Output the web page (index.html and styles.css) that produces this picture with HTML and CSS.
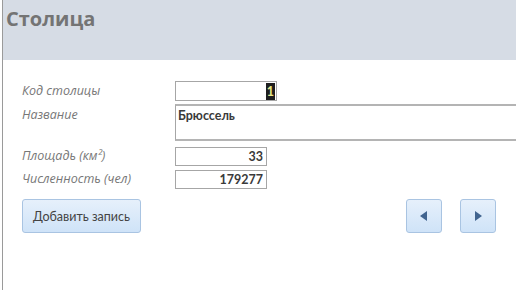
FILE: index.html
```html
<!DOCTYPE html>
<html lang="ru">
<head>
  <meta charset="UTF-8" />
  <title>Столица</title>
  <link rel="stylesheet" href="styles.css">
</head>
<body>
  <div class="frame">
    <div class="header">
      <h1>Столица</h1>
    </div>

    <div class="form">
      <div class="row row-code">
        <div class="label">Код столицы</div>
        <div class="field field-code"><span class="sel">1</span></div>
      </div>
      <div class="row row-name">
        <div class="label">Название</div>
        <div class="field field-name">Брюссель</div>
      </div>
      <div class="row row-area">
        <div class="label">Площадь (км²)</div>
        <div class="field field-num">33</div>
      </div>
      <div class="row row-pop">
        <div class="label">Численность (чел)</div>
        <div class="field field-num">179277</div>
      </div>
    </div>

    <div class="actions">
      <button class="btn btn-add">Добавить запись</button>
      <div class="nav">
        <button class="btn btn-nav">
          <svg width="8" height="10" viewBox="0 0 8 10"><polygon points="7,0 7,10 0,5" fill="#41648f"/></svg>
        </button>
        <button class="btn btn-nav">
          <svg width="8" height="10" viewBox="0 0 8 10"><polygon points="1,0 1,10 8,5" fill="#41648f"/></svg>
        </button>
      </div>
    </div>
  </div>
</body>
</html>
```

FILE: styles.css
```css
body {
  margin: 0;
  background: #fff;
  font-family: 'Open Sans', 'Liberation Sans', sans-serif;
  width: 516px;
  height: 290px;
  overflow: hidden;
}
.frame {
  margin-left: 2px;
  border-left: 1px solid #9a9a9a;
  height: 290px;
}
.header {
  height: 60px;
  background: #d6dce5;
  padding: 5px 0 0 3px;
  box-sizing: border-box;
}
h1 {
  margin: 0;
  font-size: 20px;
  font-weight: bold;
  color: #747474;
  line-height: 28px;
}
.form {
  padding-top: 21px;
}
.row {
  display: flex;
  align-items: flex-start;
}
.label {
  width: 153px;
  padding-left: 19px;
  font-size: 12.5px;
  font-style: italic;
  color: #777;
  line-height: 18px;
}
.field {
  box-sizing: border-box;
  border: 1px solid #a6a6a6;
  font-family: 'Lato', 'Liberation Sans', sans-serif;
  font-size: 12.5px;
  font-weight: bold;
  color: #3a3a3a;
  background: #fff;
}
.row-code .label { padding-top: 1px; }
.field-code {
  width: 102px;
  height: 20px;
  display: flex;
  justify-content: flex-end;
  align-items: center;
  padding-right: 1px;
}
.sel {
  background: #1e1e1e;
  color: #e9e98a;
  line-height: 17px;
  padding: 0 1px;
}
.row-name {
  margin-top: 3px;
}
.row-name .label { padding-top: 2px; }
.field-name {
  flex: 1;
  height: 37px;
  border-top: 2px solid #b4b4b4;
  border-bottom: 2px solid #b4b4b4;
  border-right: none;
  padding: 1px 0 0 2px;
  line-height: 18px;
}
.row-area {
  margin-top: 6px;
}
.row-pop {
  margin-top: 4px;
}
.field-num {
  width: 92px;
  height: 19px;
  text-align: right;
  padding-right: 3px;
  line-height: 17px;
}
.actions {
  display: flex;
  justify-content: space-between;
  margin-top: 10px;
  padding: 0 20px 0 19px;
}
.nav {
  display: flex;
  gap: 18px;
}
.btn {
  box-sizing: border-box;
  height: 34px;
  border: 1px solid #a9c4e2;
  border-radius: 3px;
  background: linear-gradient(#e6f0fb, #cfe3f8);
  font-family: 'Lato', 'Liberation Sans', sans-serif;
  color: #444;
  cursor: pointer;
}
.btn-add {
  width: 119px;
  font-size: 12.5px;
  padding: 0;
}
.btn-nav {
  width: 36px;
  display: flex;
  align-items: center;
  justify-content: center;
  padding: 0;
}
```
